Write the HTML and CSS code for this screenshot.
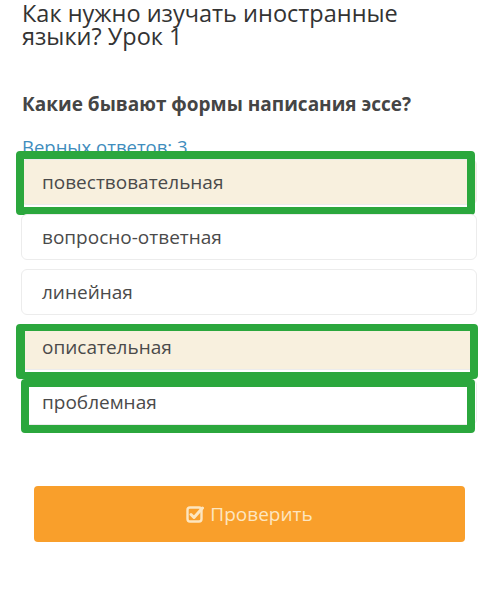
FILE: index.html
```html
<!DOCTYPE html>
<html lang="ru">
<head>
    <meta charset="UTF-8">
    <meta name="viewport" content="width=device-width, initial-scale=1.0">
    <title>Как нужно изучать иностранные языки? Урок 1</title>
    <link rel="stylesheet" href="styles.css">
</head>
<body>
    <div class="page">
        <h1 class="lesson-title">Как нужно изучать иностранные языки? Урок 1</h1>

        <h2 class="question">Какие бывают формы написания эссе?</h2>
        <div class="answers-count">Верных ответов: 3</div>

        <!-- варианты ответа -->
        <ul class="options">
            <li class="option selected mark-first">повествовательная</li>
            <li class="option">вопросно-ответная</li>
            <li class="option">линейная</li>
            <li class="option selected mark-fourth">описательная</li>
            <li class="option mark-fifth">проблемная</li>
        </ul>

        <button class="check-button">
            <svg class="check-icon" width="18" height="18" viewBox="0 0 18 18">
                <rect x="1.5" y="2.5" width="14" height="14" rx="2.5" fill="none" stroke="currentColor" stroke-width="2.4"/>
                <path d="M5 9.5 L8 12.5 L16.5 3" fill="none" stroke="currentColor" stroke-width="3" stroke-linecap="round" stroke-linejoin="round"/>
            </svg>
            Проверить
        </button>
    </div>
</body>
</html>
```

FILE: styles.css
```css
body {
    margin: 0;
    background-color: #fff;
    font-family: "Open Sans", "Noto Sans", sans-serif;
    color: #444;
}
.page {
    padding: 2px 19px 0 22px;
}
.lesson-title {
    margin: 0;
    font-size: 23.5px;
    line-height: 23px;
    font-weight: 400;
    color: #333;
}
.question {
    margin: 43px 0 0;
    font-size: 19px;
    line-height: 26px;
    font-weight: 700;
    color: #454545;
}
.answers-count {
    margin-top: 19px;
    font-size: 18.5px;
    line-height: 22px;
    color: #3f8dbd;
}
.options {
    list-style: none;
    margin: 1px 0 0 -1px;
    padding: 0;
}
.option {
    position: relative;
    box-sizing: border-box;
    height: 46px;
    margin-bottom: 9px;
    padding: 0 20px;
    border: 1px solid #ececec;
    border-radius: 6px;
    font-size: 19px;
    line-height: 44px;
    color: #4a4a4a;
    background-color: #fff;
}
.option.selected {
    background-color: #f8f0de;
}
/* зелёные рамки поверх вариантов */
.mark-first::after,
.mark-fourth::after,
.mark-fifth::after {
    content: "";
    position: absolute;
    border: 8px solid #2ba73d;
    border-radius: 4px;
}
.mark-first::after {
    top: -9px;
    bottom: -11px;
    left: -6px;
    right: 1px;
}
.mark-fourth::after {
    top: -1px;
    bottom: -10px;
    left: -6px;
    right: -2px;
    border-width: 7px 8px 7px 9px;
}
.mark-fifth::after {
    top: -1px;
    bottom: -9px;
    left: -1px;
    right: 1px;
}
.check-button {
    display: flex;
    align-items: center;
    justify-content: center;
    gap: 6px;
    width: 431px;
    height: 56px;
    margin: 61px 0 0 12px;
    border: none;
    border-radius: 4px;
    background-color: #f99f2b;
    color: #fde6c0;
    font-family: inherit;
    font-size: 19px;
}
```
